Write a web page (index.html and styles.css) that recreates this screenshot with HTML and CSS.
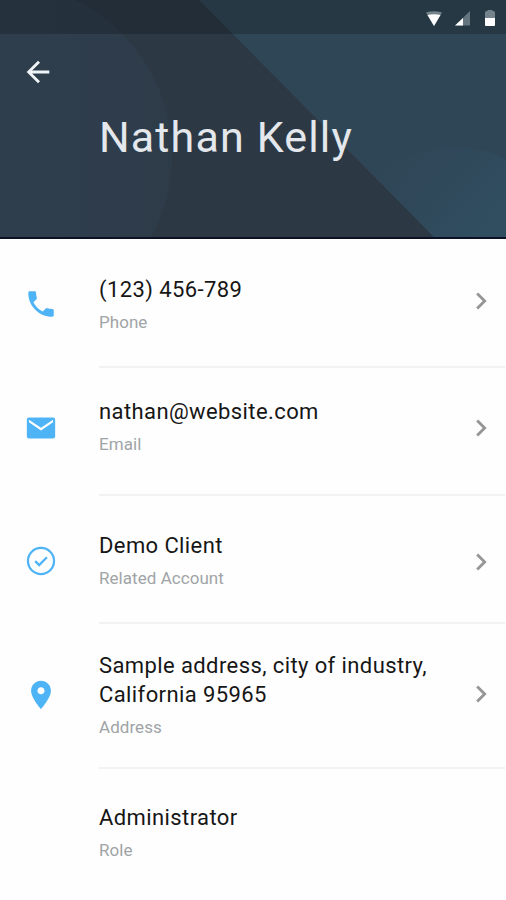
FILE: index.html
```
<!DOCTYPE html>
<html lang="en">
<head>
    <meta charset="UTF-8">
    <title>Nathan Kelly</title>
    <link rel="stylesheet" href="styles.css">
</head>
<body>
    <header class="profile-header">
        <svg class="header-bg" viewBox="0 0 506 237" preserveAspectRatio="none">
            <defs>
                <linearGradient id="glow" x1="0" y1="0" x2="1" y2="0.6">
                    <stop offset="0.1" stop-color="#30495c" stop-opacity="0"/>
                    <stop offset="1" stop-color="#304e60"/>
                </linearGradient>
                <linearGradient id="edge" x1="0.6" y1="0" x2="1" y2="0">
                    <stop offset="0" stop-color="#2f3e4d"/>
                    <stop offset="1" stop-color="#2e3c4a"/>
                </linearGradient>
            </defs>
            <rect width="506" height="237" fill="#2c3945"/>
            <circle cx="0" cy="155" r="172" fill="url(#edge)"/>
            <path d="M199 0H506V237H434Z" fill="#2f4656"/>
            <path d="M372 174C405 150 465 136 506 160V237H434Z" fill="url(#glow)"/>
        </svg>
        <div class="status-bar">
            <svg width="16" height="16" viewBox="0 0 16 16">
                <path d="M0 2.500Q8 0 16 2.500L8 16Z" fill="#75838c"/>
                <path d="M1.500 5Q8 3.500 14.500 5L8 16Z" fill="#fff"/>
            </svg>
            <svg width="16" height="16" viewBox="0 0 16 16">
                <path d="M0 15.500L15 1V15.500Z" fill="#65757f"/>
                <path d="M0 15.500L8 8V15.500Z" fill="#fff"/>
            </svg>
            <svg width="12" height="16" viewBox="0 0 12 16">
                <path d="M1 2Q1 1 3.500 1V0H8.500V1Q11 1 11 2V8H1Z" fill="#75838c"/>
                <path d="M1 8H11V15Q11 16 10 16H2Q1 16 1 15Z" fill="#fff"/>
            </svg>
        </div>
        <svg class="back-btn" viewBox="0 0 24 24">
            <path d="M20 11H7.830l5.590-5.590L12 4l-8 8 8 8 1.410-1.410L7.830 13H20v-2z"/>
        </svg>
        <h1 class="profile-name">Nathan Kelly</h1>
    </header>

    <main class="contact-list">
        <div class="contact-row row-phone">
            <svg class="icon" viewBox="0 0 24 24">
                <path d="M6.620 10.790c1.440 2.830 3.760 5.140 6.590 6.590l2.200-2.200c.27-.27.67-.36 1.020-.24 1.120.37 2.330.57 3.570.57.550 0 1 .45 1 1V20c0 .55-.45 1-1 1-9.390 0-17-7.610-17-17 0-.55.45-1 1-1h3.500c.55 0 1 .45 1 1 0 1.250.2 2.450.57 3.570.11.35.03.74-.25 1.020l-2.200 2.200z"/>
            </svg>
            <div class="contact-info">
                <div class="contact-value">(123) 456-789</div>
                <div class="contact-label">Phone</div>
            </div>
            <svg class="chevron" viewBox="0 0 24 24"><path d="M10 6L8.590 7.410 13.170 12l-4.580 4.590L10 18l6-6z"/></svg>
        </div>

        <div class="contact-row row-email">
            <svg class="icon" viewBox="0 0 24 24">
                <path d="M20.500 4.600h-17c-.8 0-1.500.6-1.500 1.400v12c0 .8.700 1.400 1.500 1.400h17c.8 0 1.500-.6 1.500-1.400V6c0-.8-.7-1.400-1.500-1.400zm0 3.300L12 13.700 3.500 7.900V6.200l8.500 5.700 8.500-5.700v1.700z"/>
            </svg>
            <div class="contact-info">
                <div class="contact-value">nathan@website.com</div>
                <div class="contact-label">Email</div>
            </div>
            <svg class="chevron" viewBox="0 0 24 24"><path d="M10 6L8.590 7.410 13.170 12l-4.580 4.590L10 18l6-6z"/></svg>
        </div>

        <div class="contact-row row-account">
            <svg class="icon icon-line" viewBox="0 0 24 24">
                <circle cx="12" cy="12" r="9.200"/>
                <path d="M7.900 12.100l2.800 2.800 5.500-5.600"/>
            </svg>
            <div class="contact-info">
                <div class="contact-value">Demo Client</div>
                <div class="contact-label">Related Account</div>
            </div>
            <svg class="chevron" viewBox="0 0 24 24"><path d="M10 6L8.590 7.410 13.170 12l-4.580 4.590L10 18l6-6z"/></svg>
        </div>

        <div class="contact-row row-address">
            <svg class="icon" viewBox="0 0 24 24">
                <path d="M12 2C8.130 2 5 5.130 5 9c0 5.250 7 13 7 13s7-7.750 7-13c0-3.870-3.130-7-7-7zm0 9.500c-1.380 0-2.500-1.120-2.500-2.500s1.120-2.500 2.500-2.500 2.500 1.120 2.500 2.500-1.120 2.500-2.500 2.500z"/>
            </svg>
            <div class="contact-info">
                <div class="contact-value">Sample address, city of industry,<br>California 95965</div>
                <div class="contact-label">Address</div>
            </div>
            <svg class="chevron" viewBox="0 0 24 24"><path d="M10 6L8.590 7.410 13.170 12l-4.580 4.590L10 18l6-6z"/></svg>
        </div>

        <div class="contact-row row-role">
            <div class="contact-info">
                <div class="contact-value">Administrator</div>
                <div class="contact-label">Role</div>
            </div>
        </div>
    </main>
</body>
</html>
```
FILE: styles.css
```
* {
    margin: 0;
    padding: 0;
    box-sizing: border-box;
}

body {
    font-family: Roboto, "Liberation Sans", sans-serif;
    background: #fefefe;
    height: 900px;
    overflow: hidden;
}

svg {
    display: block;
    flex-shrink: 0;
}

/* header */
.profile-header {
    position: relative;
    z-index: 0;
    height: 239px;
    background: #2c3945;
    border-bottom: 2px solid #0c1224;
}

.header-bg {
    position: absolute;
    top: 0;
    left: 0;
    width: 100%;
    height: 100%;
    z-index: -1;
}

.status-bar {
    display: flex;
    justify-content: flex-end;
    gap: 13px;
    height: 34px;
    padding: 10px 10px 0 0;
    background: rgba(0, 0, 0, 0.2);
}

.back-btn {
    width: 34px;
    height: 34px;
    margin: 21px 0 0 21px;
    fill: #f0f4f7;
}

.profile-name {
    margin: 23px 0 0 99px;
    font-size: 43px;
    font-weight: 400;
    line-height: 50px;
    letter-spacing: 1.15px;
    color: #e4e8ec;
}

/* contact rows */
.contact-row {
    display: grid;
    grid-template-columns: 34px minmax(0, 1fr) 34px;
    column-gap: 41px;
    align-items: start;
    position: relative;
    height: 128px;
    padding: 35px 8px 0 24px;
}

.contact-row::after {
    content: "";
    position: absolute;
    left: 99px;
    right: 1px;
    bottom: 0;
    height: 2px;
    background: #f2f2f2;
}

.contact-info {
    grid-column: 2;
    white-space: nowrap;
}

.contact-value {
    font-size: 22px;
    line-height: 29px;
    letter-spacing: 0.4px;
    color: #161616;
}

.contact-label {
    margin-top: 6px;
    font-size: 17px;
    line-height: 24px;
    letter-spacing: 0.05px;
    color: #a0a4a6;
}

.icon {
    width: 34px;
    height: 34px;
    margin-top: 13px;
    fill: #4fb4f6;
}

.icon-line {
    fill: none;
    stroke: #4fb4f6;
    stroke-width: 1.6;
}

.chevron {
    width: 34px;
    height: 34px;
    margin-top: 14px;
    fill: #969696;
}

.row-phone {
    height: 129px;
    padding-top: 36px;
}

.row-phone .icon {
    margin-top: 12px;
}

.row-phone .chevron {
    margin-top: 9px;
}

.row-email {
    padding-top: 29px;
}

.row-email .icon {
    margin-top: 14px;
}

.row-address {
    height: 145px;
    padding-top: 27px;
}

.row-address .icon {
    margin-top: 27px;
}

.row-address .chevron {
    margin-top: 26px;
}

.row-role {
    padding-top: 34px;
}

.row-role::after {
    display: none;
}
```
